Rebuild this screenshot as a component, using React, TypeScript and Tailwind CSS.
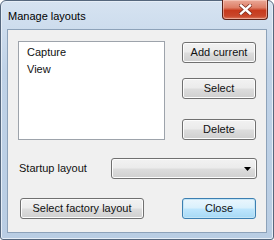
import React from 'react';

const font = { fontFamily: '"Liberation Sans", Arial, sans-serif' };

const btn =
  'flex items-center justify-center h-[21px] rounded-[3px] border border-[#707070] text-[11px] text-[#111] bg-[linear-gradient(#f2f2f2_0%,#ebebeb_48%,#dddddd_52%,#cfcfcf_100%)] shadow-[inset_0_0_0_1px_#fcfcfc]';

function CloseX() {
  return (
    <svg width="13" height="11" viewBox="0 0 13 11">
      <path d="M2 1.5 L11 9.5 M11 1.5 L2 9.5" stroke="#7a2a1c" strokeWidth="3.8" strokeLinecap="square" />
      <path d="M2 1.5 L11 9.5 M11 1.5 L2 9.5" stroke="#ffffff" strokeWidth="2.4" strokeLinecap="square" />
    </svg>
  );
}

export default function App() {
  return (
    <div style={font} className="w-[274px] h-[240px] bg-white">
      <div className="w-[274px] h-[240px] flex flex-col border border-[#55677d] rounded-t-[6px] rounded-b-[3px] bg-[linear-gradient(#d6e3f1,#bfd2e7_30%,#b9cde3)] px-[6px] pb-[6px] shadow-[inset_0_0_0_1px_#e6eef7]">
        {/* Title bar */}
        <div className="h-[28px] flex items-start shrink-0">
          <span className="mt-[7px] ml-[1px] text-[11px] text-black">Manage layouts</span>
          <button
            aria-label="Close"
            className="ml-auto -mr-[1px] -mt-[1px] w-[46px] h-[20px] flex items-center justify-center border border-[#5b2218] border-t-0 rounded-b-[4px] bg-[linear-gradient(#eaa998_0%,#de7e66_40%,#c73a1d_55%,#c9472b_85%,#dc7a5e_100%)] shadow-[inset_0_0_0_1px_rgba(255,220,210,0.5)]"
          >
            <CloseX />
          </button>
        </div>

        {/* Client area */}
        <div className="flex-1 flex flex-col border border-[#8da2b9] bg-[#f0f0f0] pl-[10px] pt-[11px] text-[11px] text-[#111]">
          <div className="flex">
            <div className="w-[147px] h-[99px] bg-white border border-[#9da3ab] pl-[8px] pt-[2px] leading-[17px]">
              <div>Capture</div>
              <div>View</div>
            </div>
            <div className="flex flex-col ml-[17px] w-[74px]">
              <button className={`${btn} mt-[1px]`}>Add current</button>
              <button className={`${btn} mt-[15px]`}>Select</button>
              <button className={`${btn} mt-[20px]`}>Delete</button>
            </div>
          </div>

          <div className="flex items-center mt-[18px]">
            <span className="ml-[1px] w-[92px]">Startup layout</span>
            <div className={`${btn} w-[146px] justify-end pr-[5px]`}>
              <svg width="7" height="4" viewBox="0 0 7 4">
                <path d="M0 0 H7 L3.5 4 Z" fill="#000" />
              </svg>
            </div>
          </div>

          <div className="flex items-center mt-[19px]">
            <button className={`${btn} ml-[2px] w-[124px]`}>Select factory layout</button>
            <button className="ml-[38px] flex items-center justify-center w-[74px] h-[21px] rounded-[3px] border border-[#3c7fb1] text-[11px] text-[#111] bg-[linear-gradient(#eaf6fd_0%,#d9f0fc_48%,#bee6fd_52%,#a7d9f5_100%)] shadow-[inset_0_0_0_1px_#c4e5f6]">
              Close
            </button>
          </div>
        </div>
      </div>
    </div>
  );
}
